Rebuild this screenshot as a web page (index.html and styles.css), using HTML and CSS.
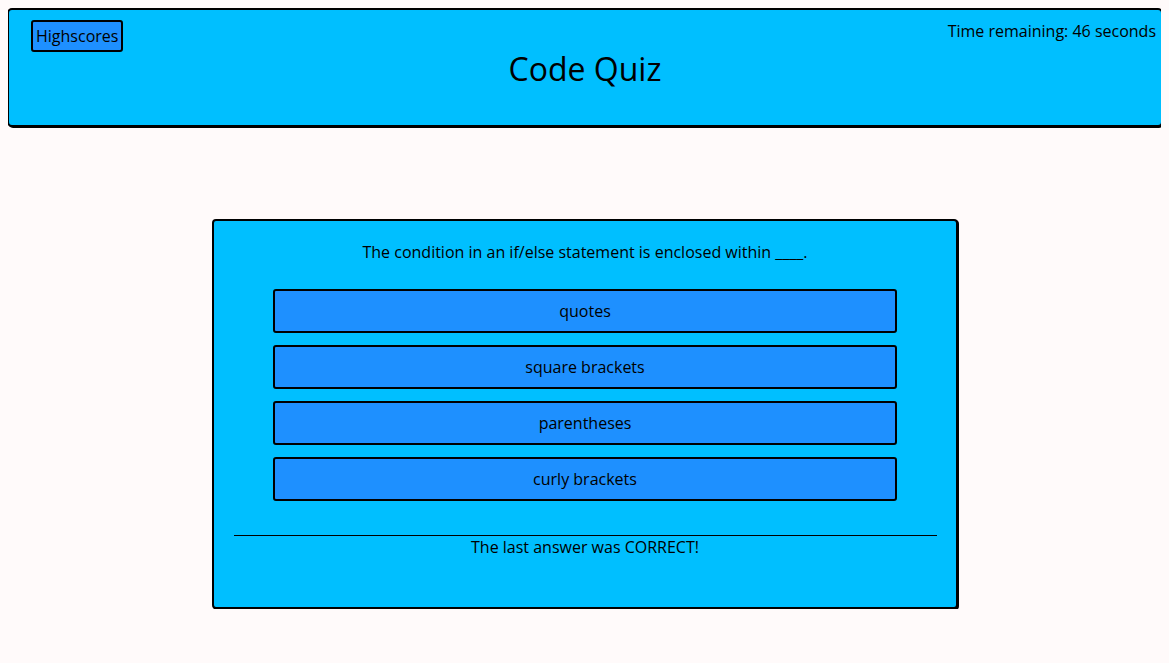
FILE: index.html
```html
<!DOCTYPE html>
<html lang="en">
<head>
<meta charset="utf-8">
<title>Code Quiz</title>
<link rel="stylesheet" href="styles.css">
</head>
<body>
<header class="top">
  <div class="top-left"><button class="hs-btn">Highscores</button></div>
  <h1 class="title">Code Quiz</h1>
  <div class="top-right"><span class="timer">Time remaining: 46 seconds</span></div>
</header>
<main class="quiz">
  <p class="question">The condition in an if/else statement is enclosed within ____.</p>
  <div class="answers">
    <button class="answer">quotes</button>
    <button class="answer">square brackets</button>
    <button class="answer">parentheses</button>
    <button class="answer">curly brackets</button>
  </div>
  <div class="feedback">
    <p class="feedback-text">The last answer was CORRECT!</p>
  </div>
</main>
</body>
</html>
```
FILE: styles.css
```css
* { box-sizing: border-box; }
body {
  margin: 8px;
  background: #fffafa;
  font-family: "Open Sans", sans-serif;
  font-size: 16px;
  color: #000;
}
.top {
  display: grid;
  grid-template-columns: 1fr auto 1fr;
  height: 119px;
  margin: 0 -2px 0 -1px;
  background: #00bfff;
  border: 2px solid #000;
  border-radius: 5px;
  box-shadow: 1px 1px 0 #000;
}
.top-left { padding: 10px 0 0 22px; }
.hs-btn {
  font-family: "Open Sans", sans-serif;
  font-size: 16px;
  color: #000;
  background: #1e90ff;
  border: 2px solid #000;
  border-radius: 3px;
  padding: 2px 3px;
  height: 32px;
  line-height: 22px;
  cursor: pointer;
}
.title {
  margin: 0;
  padding-top: 37px;
  font-size: 32px;
  font-weight: 500;
  line-height: 44px;
}
.top-right {
  text-align: right;
  padding: 10px 5px 0 0;
}
.timer { line-height: 22px; }
.quiz {
  width: 746px;
  margin: 92px auto 0;
  height: 390px;
  background: #00bfff;
  border: 2px solid #000;
  border-radius: 4px;
  box-shadow: 1px 1px 0 #000;
  padding: 20px 19px 0 20px;
}
.question {
  margin: 0;
  text-align: center;
  line-height: 22px;
}
.answers {
  margin: 26px auto 0;
  width: 624px;
  display: flex;
  flex-direction: column;
  gap: 12px;
}
.answer {
  height: 44px;
  background: #1e90ff;
  border: 2px solid #000;
  border-radius: 3px;
  font-family: "Open Sans", sans-serif;
  font-size: 16px;
  color: #000;
  cursor: pointer;
}
.feedback {
  margin-top: 34px;
  border-top: 1px solid #000;
}
.feedback-text {
  margin: 0;
  text-align: center;
  line-height: 22px;
}
```
